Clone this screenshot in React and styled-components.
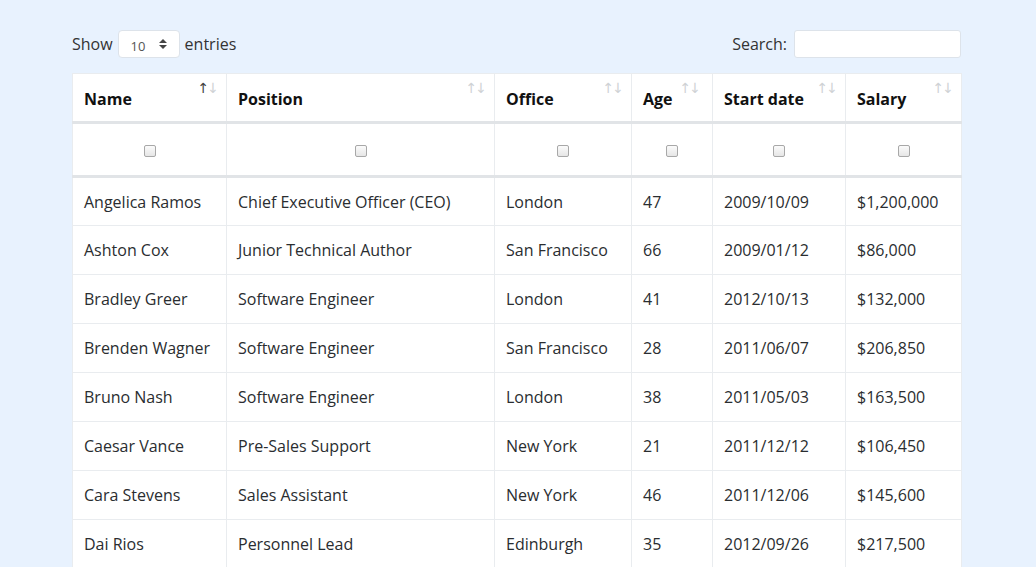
import styled, { createGlobalStyle } from "styled-components";

const GlobalStyle = createGlobalStyle`
    html, body {
        margin: 0;
        padding: 0;
        background: #e8f2fe;
        font-family: "Segoe UI", "Open Sans", "Noto Sans", sans-serif;
        color: #212529;
    }
`

const Page = styled.div`
    width: 1036px;
    height: 567px;
    overflow: hidden;
    padding: 30px 75px 0 72px;
    box-sizing: border-box;
`

const TopBar = styled.div`
    display: flex;
    justify-content: space-between;
    align-items: center;
    height: 28px;
    width: 889px;
    margin-bottom: 15px;
    font-size: 16px;
`

const Control = styled.label`
    display: flex;
    align-items: center;
    gap: ${({ gap }) => gap || '4px'};
    color: #333;
`

const Select = styled.div`
    width: 62px;
    height: 28px;
    box-sizing: border-box;
    background: #fff;
    border: 1px solid #dde3ea;
    border-radius: 4px;
    display: flex;
    align-items: center;
    justify-content: space-between;
    padding: 3px 12px 0 12px;
    font-size: 13px;
    color: #555;
`

const SearchInput = styled.input`
    width: 167px;
    height: 28px;
    box-sizing: border-box;
    border: 1px solid #dde3ea;
    border-radius: 3px;
    background: #fff;
    outline: none;
`

const Table = styled.table`
    width: 889px;
    table-layout: fixed;
    border-collapse: collapse;
    background: #fff;
    font-size: 16px;
`

const Th = styled.th`
    height: 49px;
    padding: 0 9px 0 11px;
    text-align: left;
    font-weight: 700;
    color: #111;
    border: 1px solid #e9ecef;
    border-bottom: 3px solid #e1e4e7;
    box-sizing: border-box;
`

const HeadInner = styled.div`
    display: flex;
    align-items: flex-start;
    justify-content: ${({ tight }) => tight ? 'flex-start' : 'space-between'};
    gap: 7px;
    padding-top: 3px;
`

const Arrows = styled.span`
    font-family: "DejaVu Sans", sans-serif;
    font-size: 14px;
    font-weight: 400;
    line-height: 1;
    letter-spacing: -2px;
    margin-top: -7px;
    color: #cfd2d5;
`

const Up = styled.span`
    color: ${({ active }) => active ? '#444' : '#cfd2d5'};
`

const FilterCell = styled.td`
    height: 49px;
    text-align: center;
    border: 1px solid #e9ecef;
    border-bottom: 3px solid #e1e4e7;
`

const Check = styled.span`
    display: inline-block;
    width: 10px;
    height: 10px;
    border: 1px solid #a8a8a8;
    border-radius: 2px;
    background: linear-gradient(#fbfbfb, #e6e6e6);
    vertical-align: middle;
`

const Td = styled.td`
    height: 49px;
    padding: 0 11px;
    color: #2a2d30;
    border: 1px solid #e9ecef;
    white-space: nowrap;
    box-sizing: border-box;
`

const widths = [154, 268, 137, 81, 133, 116]

const columns = ['Name', 'Position', 'Office', 'Age', 'Start date', 'Salary']

const rows = [
    ['Angelica Ramos', 'Chief Executive Officer (CEO)', 'London', '47', '2009/10/09', '$1,200,000'],
    ['Ashton Cox', 'Junior Technical Author', 'San Francisco', '66', '2009/01/12', '$86,000'],
    ['Bradley Greer', 'Software Engineer', 'London', '41', '2012/10/13', '$132,000'],
    ['Brenden Wagner', 'Software Engineer', 'San Francisco', '28', '2011/06/07', '$206,850'],
    ['Bruno Nash', 'Software Engineer', 'London', '38', '2011/05/03', '$163,500'],
    ['Caesar Vance', 'Pre-Sales Support', 'New York', '21', '2011/12/12', '$106,450'],
    ['Cara Stevens', 'Sales Assistant', 'New York', '46', '2011/12/06', '$145,600'],
    ['Dai Rios', 'Personnel Lead', 'Edinburgh', '35', '2012/09/26', '$217,500'],
]

const Caret = () => (
    <svg width="8" height="10" viewBox="0 0 8 10" style={{ marginTop: -3 }}>
        <path d="M4 0 L8 4 H0 Z M0 6 H8 L4 10 Z" fill="#444" />
    </svg>
)

const App = () => {

    return (
        <Page>
            <GlobalStyle />
            <TopBar>
                <Control gap='5px'>
                    Show
                    <Select>10<Caret /></Select>
                    entries
                </Control>
                <Control gap='7px'>
                    Search:
                    <SearchInput type='text' />
                </Control>
            </TopBar>
            <Table>
                <colgroup>
                    {widths.map((w, i) => <col key={i} style={{ width: w }} />)}
                </colgroup>
                <thead>
                    <tr>
                        {columns.map((c, i) => (
                            <Th key={c}>
                                <HeadInner tight={c === 'Age'}>
                                    {c}
                                    <Arrows><Up active={i === 0}>↑</Up>↓</Arrows>
                                </HeadInner>
                            </Th>
                        ))}
                    </tr>
                    <tr>
                        {columns.map(c => (
                            <FilterCell key={c}><Check /></FilterCell>
                        ))}
                    </tr>
                </thead>
                <tbody>
                    {rows.map(r => (
                        <tr key={r[0]}>
                            {r.map((v, i) => <Td key={i}>{v}</Td>)}
                        </tr>
                    ))}
                </tbody>
            </Table>
        </Page>
    )

}

export default App;
